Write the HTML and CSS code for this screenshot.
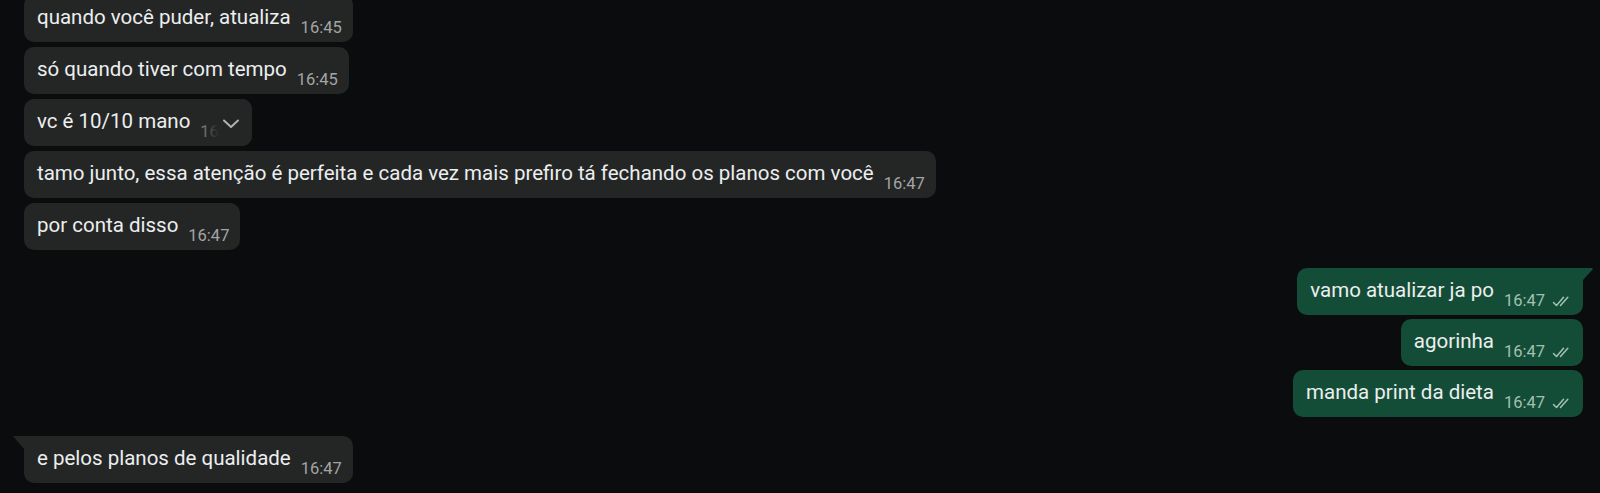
FILE: index.html
```html
<!DOCTYPE html>
<html lang="pt-BR">
<head>
  <meta charset="UTF-8">
  <title>Conversa</title>
  <link rel="stylesheet" href="styles.css">
</head>
<body>
  <div class="chat">
    <div class="group in">
      <div class="msg"><span class="text">quando você puder, atualiza</span><span class="meta">16:45</span></div>
      <div class="msg"><span class="text">só quando tiver com tempo</span><span class="meta">16:45</span></div>
      <div class="msg hover"><span class="text">vc é 10/10 mano</span><span class="meta">16:46</span>
        <span class="menu">
          <svg viewBox="0 0 18 10" width="18" height="10"><path d="M2 1.5 L9 8 L16 1.5" fill="none" stroke="#aeb1b1" stroke-width="2" stroke-linecap="round" stroke-linejoin="round"/></svg>
        </span>
      </div>
      <div class="msg"><span class="text">tamo junto, essa atenção é perfeita e cada vez mais prefiro tá fechando os planos com você</span><span class="meta">16:47</span></div>
      <div class="msg"><span class="text">por conta disso</span><span class="meta">16:47</span></div>
    </div>

    <div class="group out">
      <div class="msg tail"><span class="text">vamo atualizar ja po</span><span class="meta">16:47 <svg class="check" viewBox="0 0 18 11" width="18" height="11"><path d="M1.5 6.5 L4.5 9.5 L11.5 1.2 M8.5 9.5 L15.8 1.2" fill="none" stroke="currentColor" stroke-width="1.5" stroke-linecap="round" stroke-linejoin="round"/></svg></span></div>
      <div class="msg"><span class="text">agorinha</span><span class="meta">16:47 <svg class="check" viewBox="0 0 18 11" width="18" height="11"><path d="M1.5 6.5 L4.5 9.5 L11.5 1.2 M8.5 9.5 L15.8 1.2" fill="none" stroke="currentColor" stroke-width="1.5" stroke-linecap="round" stroke-linejoin="round"/></svg></span></div>
      <div class="msg"><span class="text">manda print da dieta</span><span class="meta">16:47 <svg class="check" viewBox="0 0 18 11" width="18" height="11"><path d="M1.5 6.5 L4.5 9.5 L11.5 1.2 M8.5 9.5 L15.8 1.2" fill="none" stroke="currentColor" stroke-width="1.5" stroke-linecap="round" stroke-linejoin="round"/></svg></span></div>
    </div>

    <div class="group in last">
      <div class="msg tail"><span class="text">e pelos planos de qualidade</span><span class="meta">16:47</span></div>
    </div>
  </div>
</body>
</html>
```

FILE: styles.css
```css
body { margin: 0; background: #0b0c0e; font-family: Roboto, "Noto Sans", Arial, sans-serif; color: #eceeef; overflow: hidden;}
.chat { margin-top: -5px; padding: 0 17px 0 24px; display: flex; flex-direction: column;}
.group { display: flex; flex-direction: column; align-items: flex-start; gap: 5px;}
.group.out { align-items: flex-end; gap: 4px; margin-top: 18px;}
.group.last { margin-top: 19px;}
.msg { position: relative; display: flex; align-items: flex-start; background: #242626; border-radius: 10px; padding: 10px 11px 4px 13px; font-size: 20.5px; line-height: 24px; white-space: nowrap;}
.out .msg { background: #144d37; padding-right: 13px;}
.meta { font-size: 16.5px; line-height: 20px; margin: 13px 0 0 10px; color: #a3a5a5; display: flex; align-items: center;}
.out .meta { color: #a2c0b3;}
.check { margin-left: 7px; margin-top: 1px;}
/* tails */
.in .msg.tail { border-top-left-radius: 0;}
.in .msg.tail::before { content: ""; position: absolute; left: -11px; top: 0; width: 11px; height: 13px; background: #242626; clip-path: polygon(0 0, 100% 0, 100% 100%);}
.out .msg.tail { border-top-right-radius: 0;}
.out .msg.tail::after { content: ""; position: absolute; right: -10px; top: 0; width: 10px; height: 12px; background: #144d37; clip-path: polygon(0 0, 90% 0, 100% 8%, 0 100%);}
/* hovered message with menu chevron */
.msg.hover .menu { position: absolute; right: 0; top: 0; bottom: 0; width: 52px; border-radius: 0 10px 10px 0; background: linear-gradient(to right, rgba(36,38,38,0.2) 0%, rgba(36,38,38,0.9) 30%, #242626 45%);}
.msg.hover .menu svg { position: absolute; left: 22px; top: 20px;}
```
